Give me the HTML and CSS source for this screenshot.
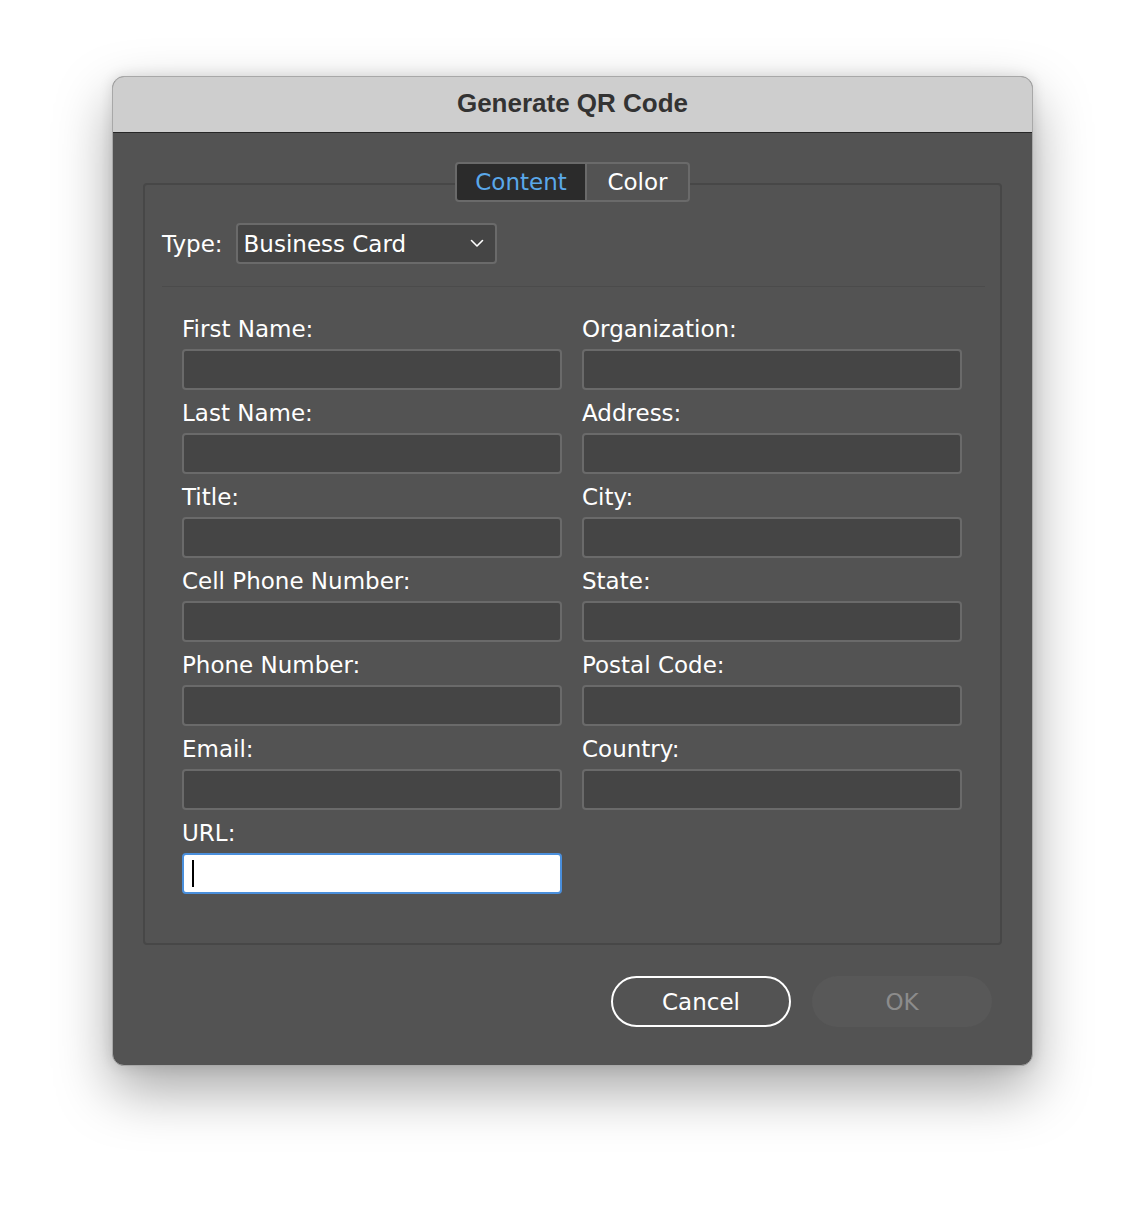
FILE: index.html
```html
<!DOCTYPE html>
<html>
<head>
<meta charset="utf-8">
<link rel="stylesheet" href="styles.css">
</head>
<body>
<div class="window">
  <div class="titlebar">Generate QR Code</div>
  <div class="body">
    <div class="group">
      <div class="tabs">
        <div class="tab active">Content</div>
        <div class="tab">Color</div>
      </div>
      <div class="type-row">
        <span class="type-label">Type:</span>
        <div class="select">
          <span>Business Card</span>
          <svg class="chev" width="14" height="9" viewBox="0 0 14 9"><path d="M1.5 1.5 L7 7 L12.5 1.5" fill="none" stroke="#ffffff" stroke-width="1.6" stroke-linecap="round" stroke-linejoin="round"/></svg>
        </div>
      </div>
      <div class="sep"></div>
      <div class="fields">
        <div class="field"><label>First Name:</label><div class="input"></div></div>
        <div class="field"><label>Organization:</label><div class="input"></div></div>
        <div class="field"><label>Last Name:</label><div class="input"></div></div>
        <div class="field"><label>Address:</label><div class="input"></div></div>
        <div class="field"><label>Title:</label><div class="input"></div></div>
        <div class="field"><label>City:</label><div class="input"></div></div>
        <div class="field"><label>Cell Phone Number:</label><div class="input"></div></div>
        <div class="field"><label>State:</label><div class="input"></div></div>
        <div class="field"><label>Phone Number:</label><div class="input"></div></div>
        <div class="field"><label>Postal Code:</label><div class="input"></div></div>
        <div class="field"><label>Email:</label><div class="input"></div></div>
        <div class="field"><label>Country:</label><div class="input"></div></div>
        <div class="field"><label>URL:</label><div class="input focused"><span class="caret"></span></div></div>
      </div>
    </div>
    <div class="buttons">
      <div class="btn cancel">Cancel</div>
      <div class="btn ok">OK</div>
    </div>
  </div>
</div>
</body>
</html>
```
FILE: styles.css
```css
html, body {
  margin: 0;
  padding: 0;
  background: #ffffff;
}
body {
  width: 1144px;
  height: 1214px;
  overflow: hidden;
  font-family: "DejaVu Sans", sans-serif;
}
.window {
  margin: 76px 0 0 112px;
  width: 921px;
  height: 990px;
  box-sizing: border-box;
  border-radius: 12px;
  overflow: hidden;
  background: #535353;
  border: 1px solid #a8a8a8;
  box-shadow: 0 24px 56px rgba(0,0,0,0.35), 0 0 14px rgba(0,0,0,0.12);
  display: flex;
  flex-direction: column;
}
.titlebar {
  height: 56px;
  flex: none;
  background: #cecece;
  border-bottom: 1px solid #262626;
  display: flex;
  align-items: center;
  justify-content: center;
  padding-bottom: 2px;
  box-sizing: border-box;
  font-family: "Liberation Sans", Arial, sans-serif;
  font-weight: bold;
  font-size: 26px;
  color: #333333;
}
.body {
  flex: 1;
  padding: 50px 30px 0 30px;
  display: flex;
  flex-direction: column;
}
.group {
  height: 762px;
  box-sizing: border-box;
  border: 2px solid #474747;
  border-radius: 4px;
  padding: 0 15px 0 17px;
}
.tabs {
  display: flex;
  justify-content: center;
  margin: -23px 0 0 -2px;
  height: 40px;
}
.tab {
  box-sizing: border-box;
  height: 40px;
  border: 2px solid #6a6a6a;
  background: #535353;
  color: #ffffff;
  font-size: 23px;
  display: flex;
  align-items: center;
  justify-content: center;
}
.tab.active {
  width: 131px;
  background: #2b2b2b;
  color: #5aa8ea;
  border-radius: 4px 0 0 4px;
  border-right-width: 1px;
}
.tab:not(.active) {
  width: 104px;
  border-left-width: 1px;
  border-radius: 0 4px 4px 0;
}
.type-row {
  display: flex;
  align-items: center;
  margin-top: 21px;
  height: 41px;
}
.type-label {
  color: #ffffff;
  font-size: 23px;
  margin-right: 13px;
}
.select {
  box-sizing: border-box;
  width: 261px;
  height: 41px;
  border: 2px solid #6a6a6a;
  border-radius: 4px;
  background: #454545;
  color: #ffffff;
  font-size: 23px;
  display: flex;
  align-items: center;
  justify-content: space-between;
  padding: 0 11px 0 6px;
}
.sep {
  margin-top: 22px;
  height: 1px;
  background: #4b4b4b;
}
.fields {
  margin: 28px 22px 0 20px;
  display: grid;
  grid-template-columns: 380px 380px;
  column-gap: 20px;
}
.field {
  display: flex;
  flex-direction: column;
  height: 84px;
}
.field label {
  height: 28px;
  line-height: 28px;
  color: #ffffff;
  font-size: 23px;
  margin-bottom: 6px;
}
.input {
  box-sizing: border-box;
  height: 41px;
  border: 2px solid #6a6a6a;
  border-radius: 4px;
  background: #454545;
  display: flex;
  align-items: center;
}
.input.focused {
  background: #ffffff;
  border-color: #4a8fdc;
}
.caret {
  width: 2px;
  height: 27px;
  margin-left: 8px;
  background: #000000;
}
.buttons {
  display: flex;
  justify-content: flex-end;
  gap: 21px;
  margin-top: 31px;
  padding-right: 10px;
}
.btn {
  box-sizing: border-box;
  width: 180px;
  height: 51px;
  border-radius: 26px;
  display: flex;
  align-items: center;
  justify-content: center;
  font-size: 23px;
}
.cancel {
  border: 2px solid #ffffff;
  color: #ffffff;
}
.ok {
  background: #585858;
  color: #8c8c8c;
}
```
